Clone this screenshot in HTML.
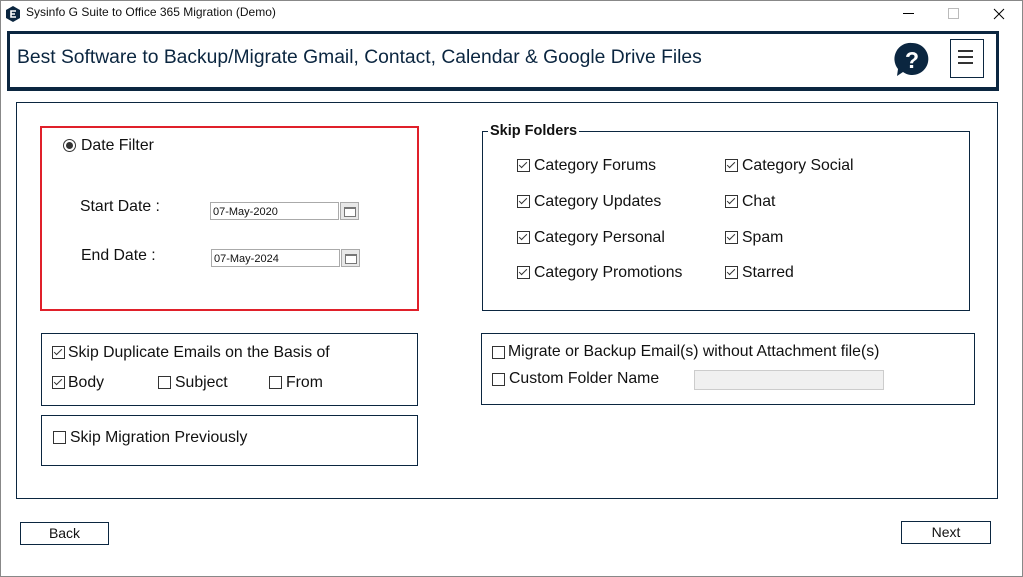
<!DOCTYPE html>
<html><head><style>
body{margin:0;width:1023px;height:577px;background:#fff;font-family:"Liberation Sans",sans-serif;position:relative;overflow:hidden;color:#111}
.a{position:absolute}
.t{font-size:15.8px;white-space:nowrap}
.cb{position:absolute;width:11px;height:11px;border:1px solid #333;background:#fff}
.cb.c::after{content:"";position:absolute;left:3px;top:0px;width:3px;height:7px;border:solid #333;border-width:0 1.5px 1.5px 0;transform:rotate(45deg)}
.box{position:absolute;border:1px solid #0b2640}
.inp{position:absolute;border:1px solid #aaa;background:#fff;font-size:11px;padding-left:2px;line-height:18px;height:18px;box-sizing:border-box}
.cal{position:absolute;width:19px;height:18px;border:1px solid #aaa;background:#e8e8e8;box-sizing:border-box}
.cal::after{content:"";position:absolute;left:3px;top:4px;width:10px;height:7px;border:1px solid #777;border-top:2px solid #777;background:#fff}
.btn{position:absolute;border:1px solid #0b2640;background:#fff;font-size:14px;text-align:center;line-height:21px;height:21px}
</style></head><body>
<div class="a" style="left:0;top:0;width:1023px;height:577px;box-sizing:border-box;border:1px solid #888"></div>
<svg class="a" style="left:6px;top:6px" width="14" height="16" viewBox="0 0 14 16"><path d="M7 0L14 4L14 12L7 16L0 12L0 4Z" fill="#0b2640"/><path d="M10 5H5V11H10M5 8H9" stroke="#fff" stroke-width="1.6" fill="none"/></svg>
<div class="a" style="left:26px;top:5px;font-size:12px">Sysinfo G Suite to Office 365 Migration (Demo)</div>
<div class="a" style="left:903px;top:13px;width:11px;height:1px;background:#000"></div>
<div class="a" style="left:948px;top:8px;width:9px;height:9px;border:1px solid #bbb"></div>
<svg class="a" style="left:993px;top:8px" width="12" height="12"><path d="M1 1L11 11M11 1L1 11" stroke="#000" stroke-width="1"/></svg>
<div class="a" style="left:7px;top:31px;width:986px;height:53px;border:3px solid #0b2640;border-bottom-width:4px"></div>
<div class="a" style="left:17px;top:47px;font-size:19.3px;color:#0b2640">Best Software to Backup/Migrate Gmail, Contact, Calendar &amp; Google Drive Files</div>
<svg class="a" style="left:894px;top:41px" width="36" height="36" viewBox="0 0 36 36"><path d="M18 2A16 16 0 1 1 9 31L3 35L4 28A16 16 0 0 1 18 2Z" fill="#0b2640"/><text x="18" y="27" text-anchor="middle" font-family="Liberation Sans" font-weight="bold" font-size="23" fill="#fff">?</text></svg>
<div class="a" style="left:950px;top:39px;width:32px;height:37px;border:1px solid #0b2640"></div>
<div class="a" style="left:958px;top:50px;width:15px;height:2px;background:#333;box-shadow:0 6px 0 #333,0 12px 0 #333"></div>
<div class="box" style="left:16px;top:102px;width:980px;height:395px"></div>
<div class="a" style="left:40px;top:126px;width:375px;height:181px;border:2px solid #e0202a"></div>
<div class="a" style="left:63px;top:139px;width:11px;height:11px;border:1px solid #333;border-radius:50%"></div>
<div class="a" style="left:66px;top:142px;width:7px;height:7px;background:#333;border-radius:50%"></div>
<div class="a t" style="left:81px;top:137px">Date Filter</div>
<div class="a t" style="left:80px;top:198px">Start Date :</div>
<div class="inp" style="left:210px;top:202px;width:129px">07-May-2020</div><div class="cal" style="left:340px;top:202px"></div>
<div class="a t" style="left:81px;top:247px">End Date :</div>
<div class="inp" style="left:211px;top:249px;width:129px">07-May-2024</div><div class="cal" style="left:341px;top:249px"></div>
<div class="box" style="left:41px;top:333px;width:375px;height:71px"></div>
<div class="cb c" style="left:52px;top:346px"></div><div class="a t" style="left:68px;top:344px">Skip Duplicate Emails on the Basis of</div>
<div class="cb c" style="left:52px;top:376px"></div><div class="a t" style="left:68px;top:374px">Body</div>
<div class="cb" style="left:158px;top:376px"></div><div class="a t" style="left:175px;top:374px">Subject</div>
<div class="cb" style="left:269px;top:376px"></div><div class="a t" style="left:286px;top:374px">From</div>
<div class="box" style="left:41px;top:415px;width:375px;height:49px"></div>
<div class="cb" style="left:53px;top:431px"></div><div class="a t" style="left:70px;top:429px">Skip Migration Previously</div>
<div class="box" style="left:482px;top:131px;width:486px;height:178px"></div>
<div class="a" style="left:488px;top:123px;background:#fff;padding:0 2px;font-size:14.5px;font-weight:bold">Skip Folders</div>
<div class="cb c" style="left:517px;top:159px"></div><div class="a t" style="left:534px;top:157px">Category Forums</div>
<div class="cb c" style="left:517px;top:195px"></div><div class="a t" style="left:534px;top:193px">Category Updates</div>
<div class="cb c" style="left:517px;top:231px"></div><div class="a t" style="left:534px;top:229px">Category Personal</div>
<div class="cb c" style="left:517px;top:266px"></div><div class="a t" style="left:534px;top:264px">Category Promotions</div>
<div class="cb c" style="left:725px;top:159px"></div><div class="a t" style="left:742px;top:157px">Category Social</div>
<div class="cb c" style="left:725px;top:195px"></div><div class="a t" style="left:742px;top:193px">Chat</div>
<div class="cb c" style="left:725px;top:231px"></div><div class="a t" style="left:742px;top:229px">Spam</div>
<div class="cb c" style="left:725px;top:266px"></div><div class="a t" style="left:742px;top:264px">Starred</div>
<div class="box" style="left:481px;top:333px;width:492px;height:70px"></div>
<div class="cb" style="left:492px;top:346px"></div><div class="a t" style="left:508px;top:343px">Migrate or Backup Email(s) without Attachment file(s)</div>
<div class="cb" style="left:492px;top:373px"></div><div class="a t" style="left:509px;top:370px">Custom Folder Name</div>
<div class="a" style="left:694px;top:370px;width:188px;height:18px;border:1px solid #ccc;background:#f0f0f0"></div>
<div class="btn" style="left:20px;top:522px;width:87px">Back</div>
<div class="btn" style="left:901px;top:521px;width:88px">Next</div>
</body></html>
